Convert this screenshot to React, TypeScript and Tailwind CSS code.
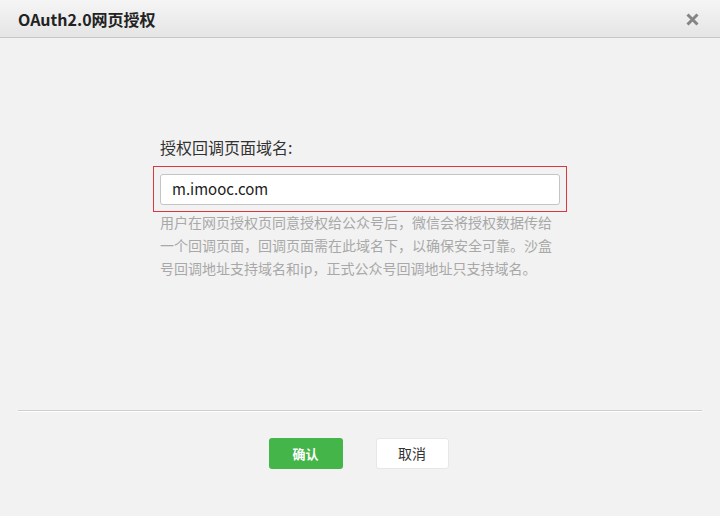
export default function App() {
  const font = { fontFamily: '"Noto Sans CJK SC", "Noto Sans", sans-serif' };
  return (
    <div className="w-[720px] h-[516px] bg-[#f2f2f2] flex flex-col" style={font}>
      <div className="h-[38px] shrink-0 flex items-center justify-between pl-[18px] pr-[21px] bg-gradient-to-b from-[#f5f5f5] to-[#e5e5e5] border-b border-[#c6c6c6]">
        <h1 className="text-[16px] font-bold text-[#222] leading-none">OAuth2.0网页授权</h1>
        <svg width="13" height="13" viewBox="0 0 13 13" className="mt-[1px]">
          <path d="M1.5 1.5 L11.5 11.5 M11.5 1.5 L1.5 11.5" stroke="#858585" strokeWidth="3" strokeLinecap="butt" />
        </svg>
      </div>

      <div className="flex-1 flex flex-col">
        <div className="pt-[99px] pl-[153px]">
          <label className="block pl-[7px] text-[16px] leading-[20px] text-[#333]">授权回调页面域名:</label>
          <div className="mt-[9px] w-[414px] h-[46px] border border-[#d9363e] px-[6px] pt-[7px]">
            <div className="h-[31px] bg-white border border-[#c4c4c4] rounded-[3px] flex items-center pl-[11px] text-[15px] text-[#222]">
              m.imooc.com
            </div>
          </div>
          <p className="ml-[7px] w-[400px] mt-[-1px] text-[14px] leading-[23px] text-[#a8a8a8]">
            用户在网页授权页同意授权给公众号后，微信会将授权数据传给一个回调页面，回调页面需在此域名下，以确保安全可靠。沙盒号回调地址支持域名和ip，正式公众号回调地址只支持域名。
          </p>
        </div>

        <div className="mt-auto mx-[18px] border-t border-[#cfcfcf] border-b-white border-b" />
        <div className="h-[104px] shrink-0 flex justify-center gap-[33px] pt-[26px] pr-[3px]">
          <button className="w-[74px] h-[31px] rounded-[3px] bg-[#44b549] text-white text-[13px] font-bold">确认</button>
          <button className="w-[73px] h-[31px] rounded-[3px] bg-white border border-[#e7e7eb] text-[#333] text-[14px]">取消</button>
        </div>
      </div>
    </div>
  );
}
